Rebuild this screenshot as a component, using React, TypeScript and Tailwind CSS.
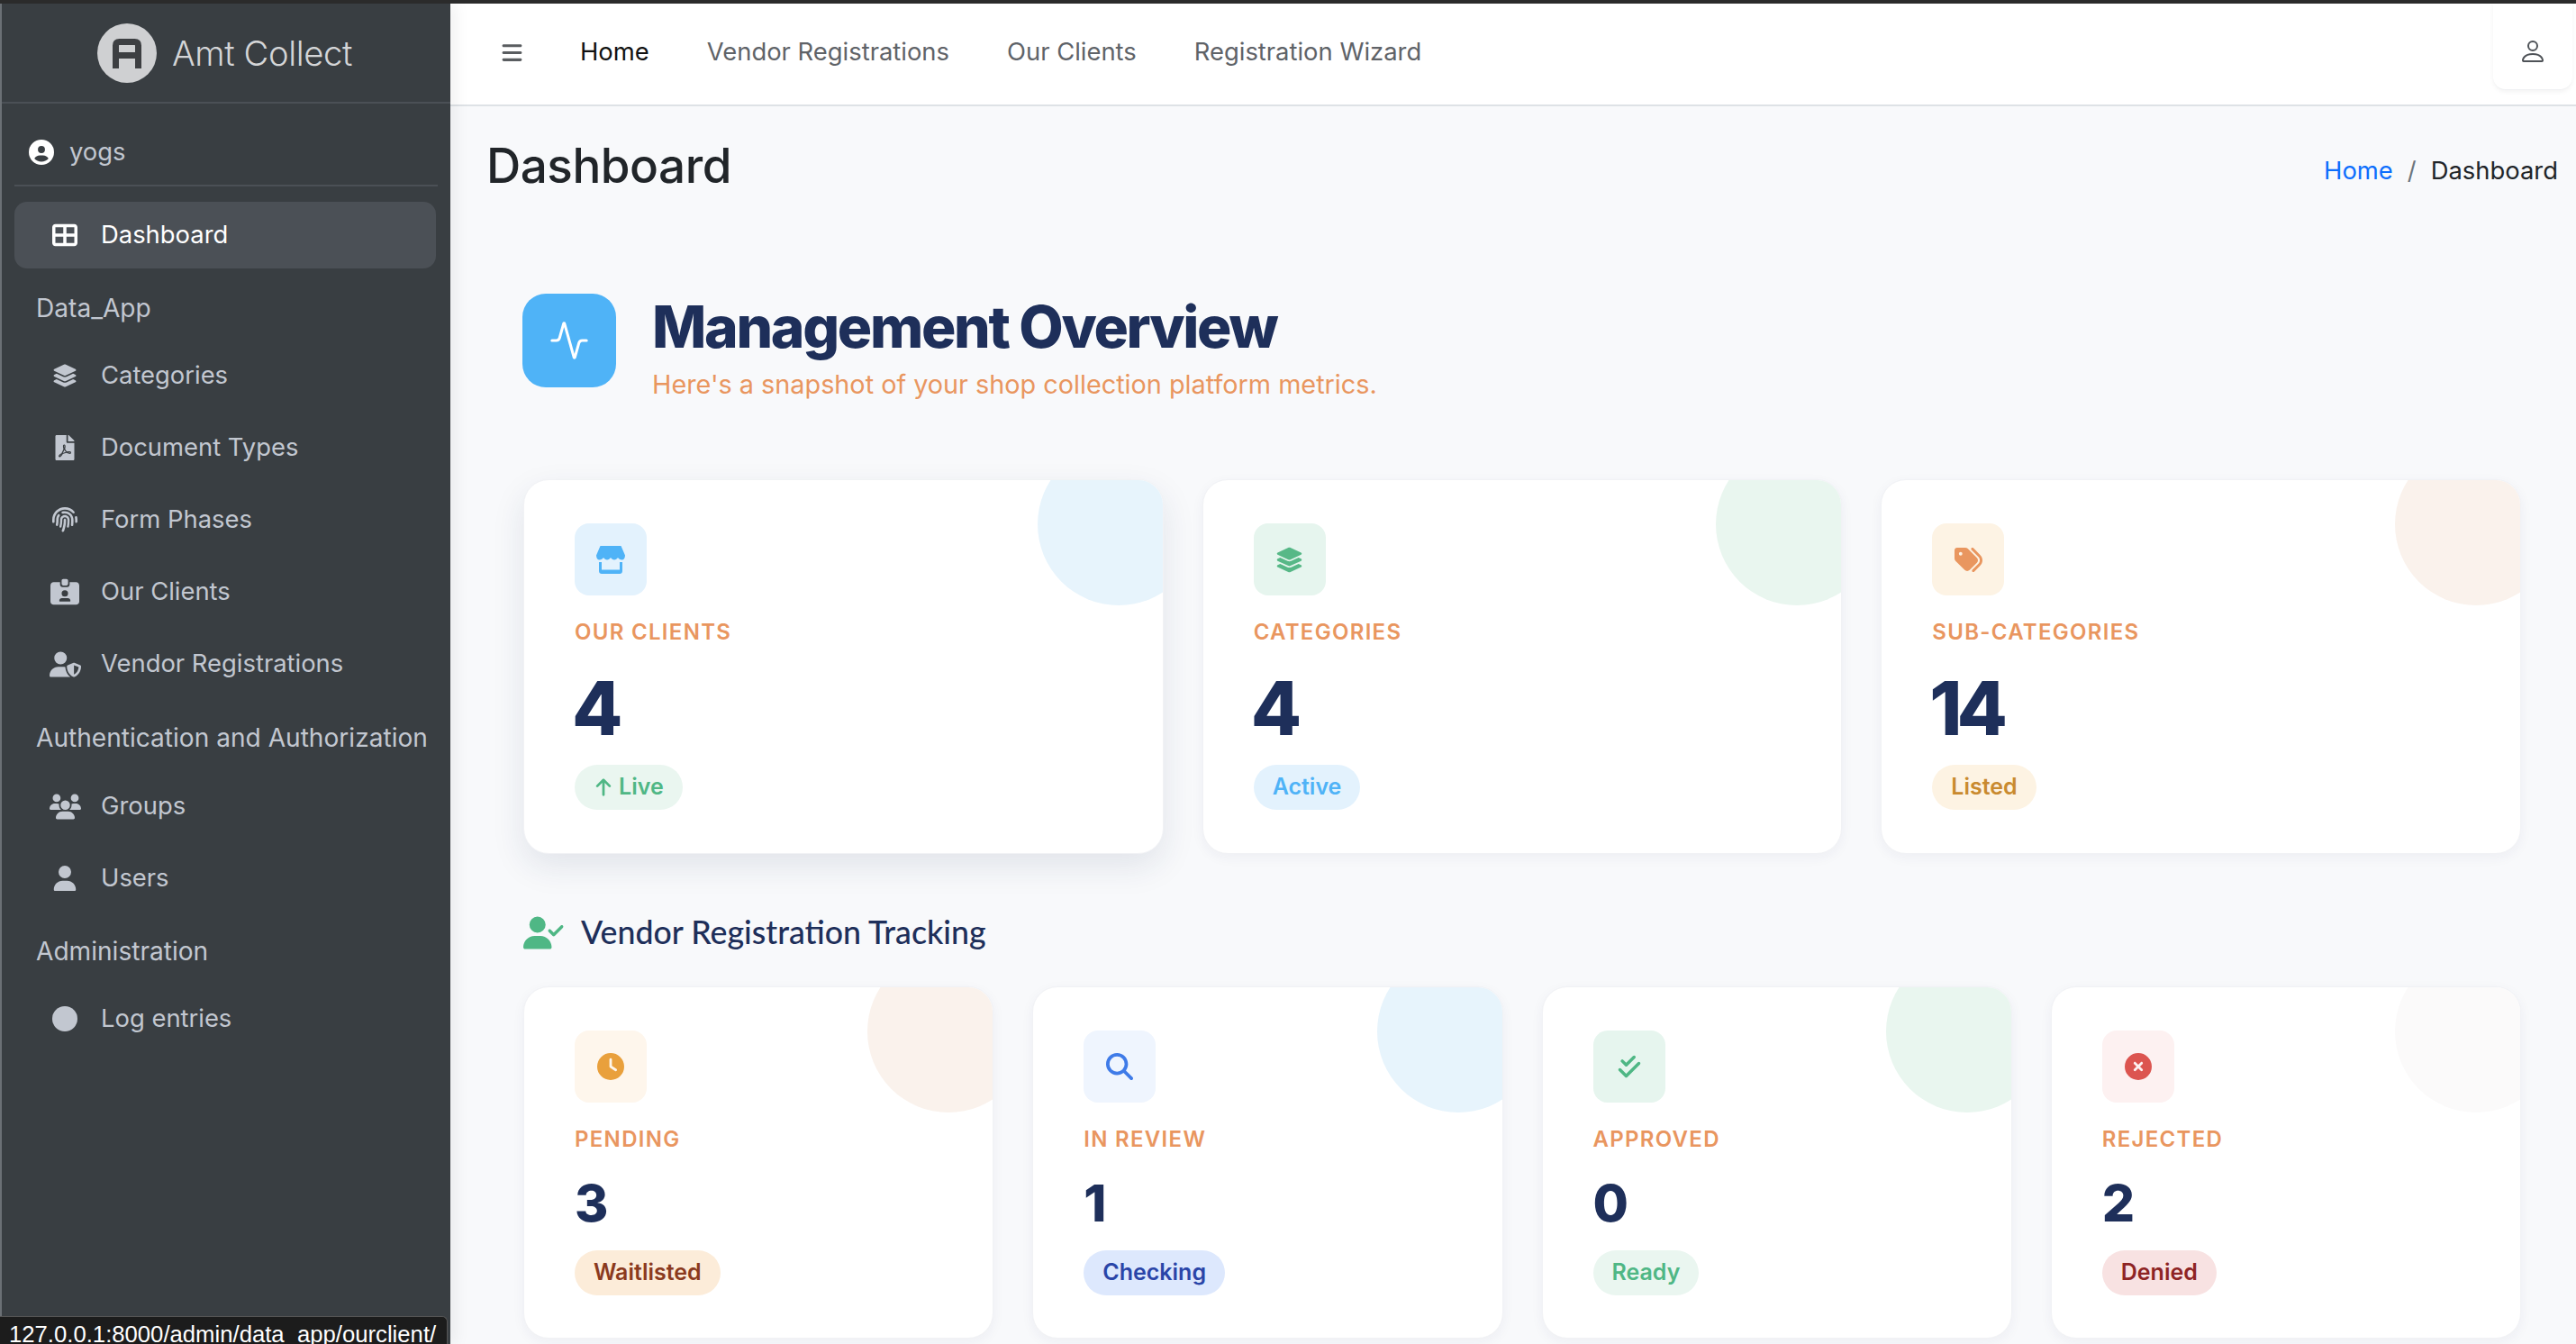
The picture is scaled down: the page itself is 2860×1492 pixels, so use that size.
import React from "react";
import { FaFilePdf } from "react-icons/fa";
import {
  FaTableCellsLarge, FaLayerGroup, FaFingerprint, FaIdCardClip, FaUserShield, FaUsers, FaUser, FaCircle,
  FaCircleUser, FaBars, FaTags, FaClock, FaMagnifyingGlass, FaCheckDouble, FaCircleXmark, FaUserCheck, FaArrowUp,
} from "react-icons/fa6";
import { BsPerson } from "react-icons/bs";
import { Activity } from "lucide-react";

const inter = "font-['Inter',sans-serif]";

function StoreIcon() {
  return (
    <svg width="32" height="31" viewBox="0 0 32 31" fill="#4fb3f7">
      <path d="M4.5 0H27.5L32 10.5C32 13.5 30.5 15.500 28.500 15.500C26.500 15.500 25 14.500 24 13C23 14.500 21.500 15.500 20 15.500C18.500 15.500 17 14.500 16 13C15 14.500 13.500 15.500 12 15.500C10.500 15.500 9 14.500 8 13C7 14.500 5.500 15.500 3.500 15.500C1.500 15.500 0 13.500 0 10.500Z" />
      <path d="M3 18H6V26.500H26V18H29V28C29 29.700 27.700 31 26 31H6C4.300 31 3 29.700 3 28Z" />
    </svg>
  );
}

function Logo() {
  return (
    <svg width="66" height="66" viewBox="0 0 66 66" className="shrink-0">
      <circle cx="33" cy="33" r="33" fill="#cfd0d2" />
      <path d="M20.500 50V24.500Q20.500 20.500 24.500 20.500H41.500Q45.500 20.500 45.500 24.500V50M20.500 35.500H45.500" stroke="#3d3f42" strokeWidth="7" fill="none" />
    </svg>
  );
}

function NavItem({ icon, label, active }: { icon: React.ReactNode; label: string; active?: boolean }) {
  return (
    <div className={`flex items-center h-[74px] mb-[6px] ml-[14px] mr-[16px] pl-[42px] gap-[26px] rounded-[14px] text-[27.4px] ${active ? "bg-[#4b5056] text-white" : "text-[#c2c7d0]"}`}>
      <span className="w-[28px] flex justify-center items-center shrink-0">{icon}</span>
      <span className="whitespace-nowrap">{label}</span>
    </div>
  );
}

function NavHeader({ label, h }: { label: string; h: string }) {
  return <div className={`flex items-center pl-[38px] text-[28.1px] text-[#c2c7d0] whitespace-nowrap ${h}`}>{label}</div>;
}

function Sidebar() {
  return (
    <aside className="w-[500px] shrink-0 bg-[#393e42] border-l-2 border-[#6b7075] relative flex flex-col shadow-[6px_0_16px_rgba(0,0,0,0.06)] z-10">
      <div className="h-[111px] flex items-center pl-[106px] gap-[17px] border-b-2 border-[#4b5056] shrink-0">
        <Logo />
        <span className="text-[38.2px] font-light text-[#d4d5d7] tracking-[-0.4px] whitespace-nowrap mt-[2px]">Amt Collect</span>
      </div>
      <div className="mx-[14px] h-[92px] pt-[17px] border-b-2 border-[#4b5056] flex items-center pl-[16px] gap-[17px] text-[27.4px] text-[#c2c7d0] shrink-0">
        <FaCircleUser size={28} color="#ffffff" />
        <span>yogs</span>
      </div>
      <div className="pt-[17px] flex flex-col">
        <NavItem active icon={<FaTableCellsLarge size={28} className="shrink-0" />} label="Dashboard" />
        <NavHeader label="Data_App" h="h-[76px]" />
        <NavItem icon={<FaLayerGroup size={28} className="shrink-0" />} label="Categories" />
        <NavItem icon={<FaFilePdf size={28} className="shrink-0" />} label="Document Types" />
        <NavItem icon={<FaFingerprint size={28} className="shrink-0" />} label="Form Phases" />
        <NavItem icon={<FaIdCardClip size={32} className="shrink-0" />} label="Our Clients" />
        <NavItem icon={<FaUserShield size={35} className="shrink-0" />} label="Vendor Registrations" />
        <NavHeader label="Authentication and Authorization" h="h-[78px]" />
        <NavItem icon={<FaUsers size={35} className="shrink-0" />} label="Groups" />
        <NavItem icon={<FaUser size={28} className="shrink-0" />} label="Users" />
        <NavHeader label="Administration" h="h-[76px]" />
        <NavItem icon={<FaCircle size={28} className="shrink-0" />} label="Log entries" />
      </div>
    </aside>
  );
}

function TopBar() {
  return (
    <header className="h-[114px] bg-white border-b-2 border-[#dee2e6] flex items-start shrink-0 relative">
      <div className="h-[108px] flex items-center pl-[56px] text-[27.4px] text-[#5f6368]">
        <FaBars size={25} color="#5a5d60" />
        <span className="ml-[63px] text-[#111111]">Home</span>
        <span className="ml-[64px]">Vendor Registrations</span>
        <span className="ml-[64px]">Our Clients</span>
        <span className="ml-[64px]">Registration Wizard</span>
      </div>
      <div className="ml-auto mr-[4px] w-[88px] h-[96px] pt-[10px] bg-white rounded-b-[14px] border-b border-[#f0f1f3] shadow-[0_2px_5px_rgba(0,0,0,0.05)] flex items-center justify-center">
        <BsPerson size={32} color="#4f5358" />
      </div>
    </header>
  );
}

type Stat = {
  label: string; value: string; pill: React.ReactNode;
  icon: React.ReactNode; tile: string; blob: string; pillCls: string;
};

function StatCard({ s, big, strong }: { s: Stat; big?: boolean; strong?: boolean }) {
  return (
    <div className={`relative overflow-hidden bg-white rounded-[28px] border border-[#f1f2f5] pl-[56px] pt-[48px] ${big ? "h-[416px]" : "h-[391px]"} ${strong ? "shadow-[0_14px_36px_rgba(30,47,90,0.10)]" : "shadow-[0_4px_14px_rgba(30,47,90,0.05)]"}`}>
      <div className={`absolute top-[-41px] right-[-41px] w-[180px] h-[180px] rounded-full ${s.blob}`} />
      <div className={`w-[80px] h-[80px] rounded-[16px] flex items-center justify-center ${s.tile}`}>{s.icon}</div>
      <div className="mt-[25px] text-[24px] leading-[32px] font-semibold tracking-[1.3px] text-[#e9965f]">{s.label}</div>
      {big ? (
        <div className="mt-[19px] mb-[12px] -ml-[3px] text-[82px] leading-[100px] font-extrabold tracking-[-6px] text-[#1e2f5a]">{s.value}</div>
      ) : (
        <div className="mt-[20px] mb-[17px] text-[57px] leading-[70px] font-extrabold text-[#1e2f5a]">{s.value}</div>
      )}
      <div className={`inline-flex items-center h-[50px] px-[21px] rounded-full text-[25px] font-semibold ${s.pillCls}`}>{s.pill}</div>
    </div>
  );
}

const top: Stat[] = [
  { label: "OUR CLIENTS", value: "4", icon: <StoreIcon />, tile: "bg-[#e3f2fd]", blob: "bg-[#e7f4fc]", pillCls: "bg-[#eaf6f0] text-[#4fb785]",
    pill: <span className="flex items-center gap-[6px]"><FaArrowUp size={22} />Live</span> },
  { label: "CATEGORIES", value: "4", icon: <FaLayerGroup size={31} color="#57b887" />, tile: "bg-[#e6f5ee]", blob: "bg-[#e9f6ef]", pillCls: "bg-[#e3f2fd] text-[#4fb3f7]", pill: "Active" },
  { label: "SUB-CATEGORIES", value: "14", icon: <FaTags size={31} color="#e9965f" />, tile: "bg-[#fdf3e4]", blob: "bg-[#faf2ec]", pillCls: "bg-[#fdf3e3] text-[#c98a2f]", pill: "Listed" },
];

const bottom: Stat[] = [
  { label: "PENDING", value: "3", icon: <FaClock size={30} color="#e9a03c" />, tile: "bg-[#fef6ec]", blob: "bg-[#faf2ec]", pillCls: "bg-[#fcecd9] text-[#8b3a1e]", pill: "Waitlisted" },
  { label: "IN REVIEW", value: "1", icon: <FaMagnifyingGlass size={30} color="#3f7be8" />, tile: "bg-[#eff5fe]", blob: "bg-[#e7f4fc]", pillCls: "bg-[#dde8fd] text-[#2a45a8]", pill: "Checking" },
  { label: "APPROVED", value: "0", icon: <FaCheckDouble size={28} color="#4fb785" />, tile: "bg-[#e6f5ee]", blob: "bg-[#e9f6ef]", pillCls: "bg-[#eaf6f0] text-[#4fb785]", pill: "Ready" },
  { label: "REJECTED", value: "2", icon: <FaCircleXmark size={30} color="#dc5550" />, tile: "bg-[#fdf1f1]", blob: "bg-[#fbfafa]", pillCls: "bg-[#f8e2e2] text-[#8e2424]", pill: "Denied" },
];

export default function App() {
  return (
    <div className={`${inter} w-[2860px] h-[1492px] overflow-hidden relative bg-[#f8f9fb] border-t-4 border-[#2b2b2b] flex`}>
      <Sidebar />
      <main className="flex-1 min-w-0 flex flex-col">
        <TopBar />
        <div className="flex items-center justify-between pl-[40px] pr-[20px] h-[128px] shrink-0">
          <h1 className="text-[53px] font-medium tracking-[-0.5px] text-[#212529] leading-none mt-[5px]">Dashboard</h1>
          <div className="flex items-center gap-[16px] text-[27.4px] text-[#212529] mt-[15px]">
            <span className="text-[#0d6efd]">Home</span>
            <span className="text-[#6c757d]">/</span>
            <span>Dashboard</span>
          </div>
        </div>
        <div className="pl-[81px] pr-[61px] pt-[80px]">
          <div className="flex items-start gap-[40px] h-[104px] -ml-[1px]">
            <div className="w-[104px] h-[104px] rounded-[26px] bg-[#4fb3f7] flex items-center justify-center shrink-0">
              <Activity size={46} color="#ffffff" strokeWidth={1.6} />
            </div>
            <div className="pt-[1px]">
              <div className="font-extrabold text-[64px] leading-[72px] text-[#1e2f5a] tracking-[-2.3px] whitespace-nowrap">Management Overview</div>
              <div className="mt-[8px] text-[28.8px] leading-[40px] text-[#e9965f] whitespace-nowrap">Here's a snapshot of your shop collection platform metrics.</div>
            </div>
          </div>
          <div className="grid grid-cols-3 gap-[43px] mt-[102px]">
            {top.map((s, i) => <StatCard key={s.label} s={s} big strong={i === 0} />)}
          </div>
          <div className="flex items-center gap-[19px] mt-[69px] h-[36px]">
            <FaUserCheck size={45} color="#4fb785" />
            <span className="font-['Lato',sans-serif] font-medium text-[35.7px] text-[#1e2f5a] whitespace-nowrap">Vendor Registration Tracking</span>
          </div>
          <div className="grid grid-cols-4 gap-[43px] mt-[42px]">
            {bottom.map((s) => <StatCard key={s.label} s={s} />)}
          </div>
        </div>
      </main>
      <div className="absolute left-0 bottom-0 w-[497px] h-[31px] bg-[#1c1c1c] border-t border-r border-[#555] rounded-tr-[6px] pl-[10px] text-[25.7px] leading-[38px] text-white font-['Liberation_Sans',sans-serif] whitespace-nowrap overflow-hidden z-20">127.0.0.1:8000/admin/data_app/ourclient/</div>
    </div>
  );
}
